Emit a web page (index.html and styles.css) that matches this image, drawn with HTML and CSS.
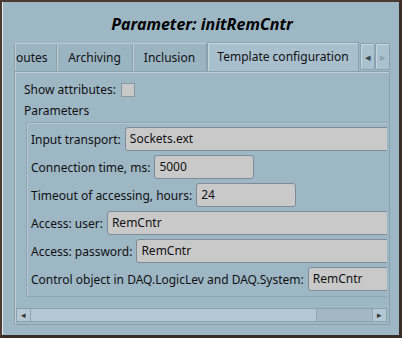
FILE: index.html
```html
<!DOCTYPE html>
<html>
<head>
    <meta charset="UTF-8">
    <title>Parameter: initRemCntr</title>
    <link rel="stylesheet" href="styles.css">
</head>
<body>
<div class="window">
    <div class="title">Parameter: initRemCntr</div>
    <div class="tabbar">
        <div class="tab first">outes</div>
        <div class="tab">Archiving</div>
        <div class="tab">Inclusion</div>
        <div class="tab active">Template configuration</div>
        <div class="tabscroll">
            <span class="tbtn">&#9666;</span>
            <span class="tbtn off">&#9656;</span>
        </div>
    </div>
    <div class="pane">
        <div class="viewport">
            <div class="content">
                <div class="line">Show attributes: <span class="check"></span></div>
                <div class="line">Parameters</div>
                <div class="group">
                    <div class="row"><span class="lbl">Input transport:</span><span class="field grow">Sockets.ext</span></div>
                    <div class="row"><span class="lbl">Connection time, ms:</span><span class="field">5000</span></div>
                    <div class="row"><span class="lbl">Timeout of accessing, hours:</span><span class="field">24</span></div>
                    <div class="row"><span class="lbl">Access: user:</span><span class="field grow">RemCntr</span></div>
                    <div class="row"><span class="lbl">Access: password:</span><span class="field grow">RemCntr</span></div>
                    <div class="row"><span class="lbl">Control object in DAQ.LogicLev and DAQ.System:</span><span class="field grow">RemCntr</span></div>
                </div>
            </div>
        </div>
        <div class="hscroll">
            <span class="sbtn">&#9666;</span>
            <span class="track"></span>
            <span class="handle"></span>
            <span class="sbtn">&#9656;</span>
        </div>
    </div>
</div>
</body>
</html>
```

FILE: styles.css
```css
* {
    margin: 0;
    padding: 0;
    box-sizing: border-box;
}

body {
    background: #3e3029;
    font-family: "Noto Sans", "Open Sans", sans-serif;
    font-size: 12px;
    color: #111;
}

.window {
    width: 402px;
    height: 338px;
    background: #9db7c5;
    border-top: 2px solid #4a3a31;
    border-left: 2px solid #4a3a31;
    border-right: 3px solid #3a2d27;
    border-bottom: 3px solid #3a2d27;
    box-shadow: inset 1px 0 0 #e6eef2;
    padding: 0 9px 0 12px;
}

.title {
    height: 41px;
    line-height: 44px;
    text-align: center;
    font-size: 16px;
    font-weight: bold;
    font-style: italic;
    color: #000;
}

/* tabs */
.tabbar {
    display: flex;
    height: 28px;
    align-items: flex-end;
}

.tab {
    height: 28px;
    line-height: 27px;
    text-align: center;
    border-top: 1px solid #b9ccd7;
    border-right: 1px solid #8aa1ae;
    box-shadow: inset 1px 0 0 #b9ccd7;
    background: #9bb4c2;
}

.tab.first {
    width: 43px;
    text-align: left;
    padding-left: 1px;
    overflow: hidden;
    border-left: 1px solid #8aa1ae;
}

.tab:nth-child(2) { width: 76px; }
.tab:nth-child(3) { width: 74px; }

.tab.active {
    width: 152px;
    height: 29px;
    background: #a8c0cd;
    border: 1px solid #8aa1ae;
    border-bottom: none;
    border-radius: 2px 2px 0 0;
    box-shadow: inset 1px 1px 0 #c7d7e0;
}

.tabscroll {
    display: flex;
    height: 28px;
    padding: 0 0 1px 1px;
}

.tbtn {
    width: 15px;
    height: 27px;
    line-height: 26px;
    text-align: center;
    font-size: 11px;
    color: #3a4850;
    background: #aac1ce;
    border: 1px solid #8aa1ae;
    border-radius: 2px;
    box-shadow: inset 1px 1px 0 #c7d7e0;
}

.tbtn.off {
    color: #8ea4b1;
}

/* pane */
.pane {
    height: 254px;
    border: 1px solid #8aa1ae;
    box-shadow: inset 1px 1px 0 #bdcfda;
    padding: 0 2px 2px 1px;
    display: flex;
    flex-direction: column;
}

.viewport {
    flex: 1;
    overflow: hidden;
}

.content {
    padding: 8px 0 0 8px;
    width: 410px;
}

.line {
    height: 20px;
    line-height: 20px;
    display: flex;
    align-items: center;
}

.line + .line {
    margin-top: 1px;
}

.check {
    display: inline-block;
    width: 14px;
    height: 14px;
    margin-left: 5px;
    background: #c9c9c9;
    border: 1px solid #8c98a0;
}

.group {
    margin: 1px 0 0 2px;
    border: 1px solid #8fa7b4;
    box-shadow: inset 1px 1px 0 #b3c7d2;
    padding: 4px 0 5px 4px;
    display: flex;
    flex-direction: column;
    gap: 4px;
}

.row {
    display: flex;
    align-items: center;
    height: 24px;
    gap: 4px;
    white-space: nowrap;
}

.field {
    width: 100px;
    height: 24px;
    line-height: 22px;
    padding-left: 4px;
    background: #c9c9c9;
    border: 1px solid #7d8c96;
    border-radius: 3px;
}

.field.grow {
    flex: 1;
}

/* horizontal scrollbar */
.hscroll {
    display: flex;
    height: 14px;
    border: 1px solid #8aa1ae;
    background: #b4c8d3;
}

.sbtn {
    width: 14px;
    text-align: center;
    font-size: 9px;
    line-height: 12px;
    color: #333;
    background: #b4c8d3;
    border-right: 1px solid #8fa6b3;
}

.sbtn:last-child {
    border-right: none;
    border-left: 1px solid #8fa6b3;
}

.track {
    flex: 1;
}

.handle {
    width: 56px;
    background: #a4b8c3;
    border-left: 1px solid #93a9b5;
}
```
